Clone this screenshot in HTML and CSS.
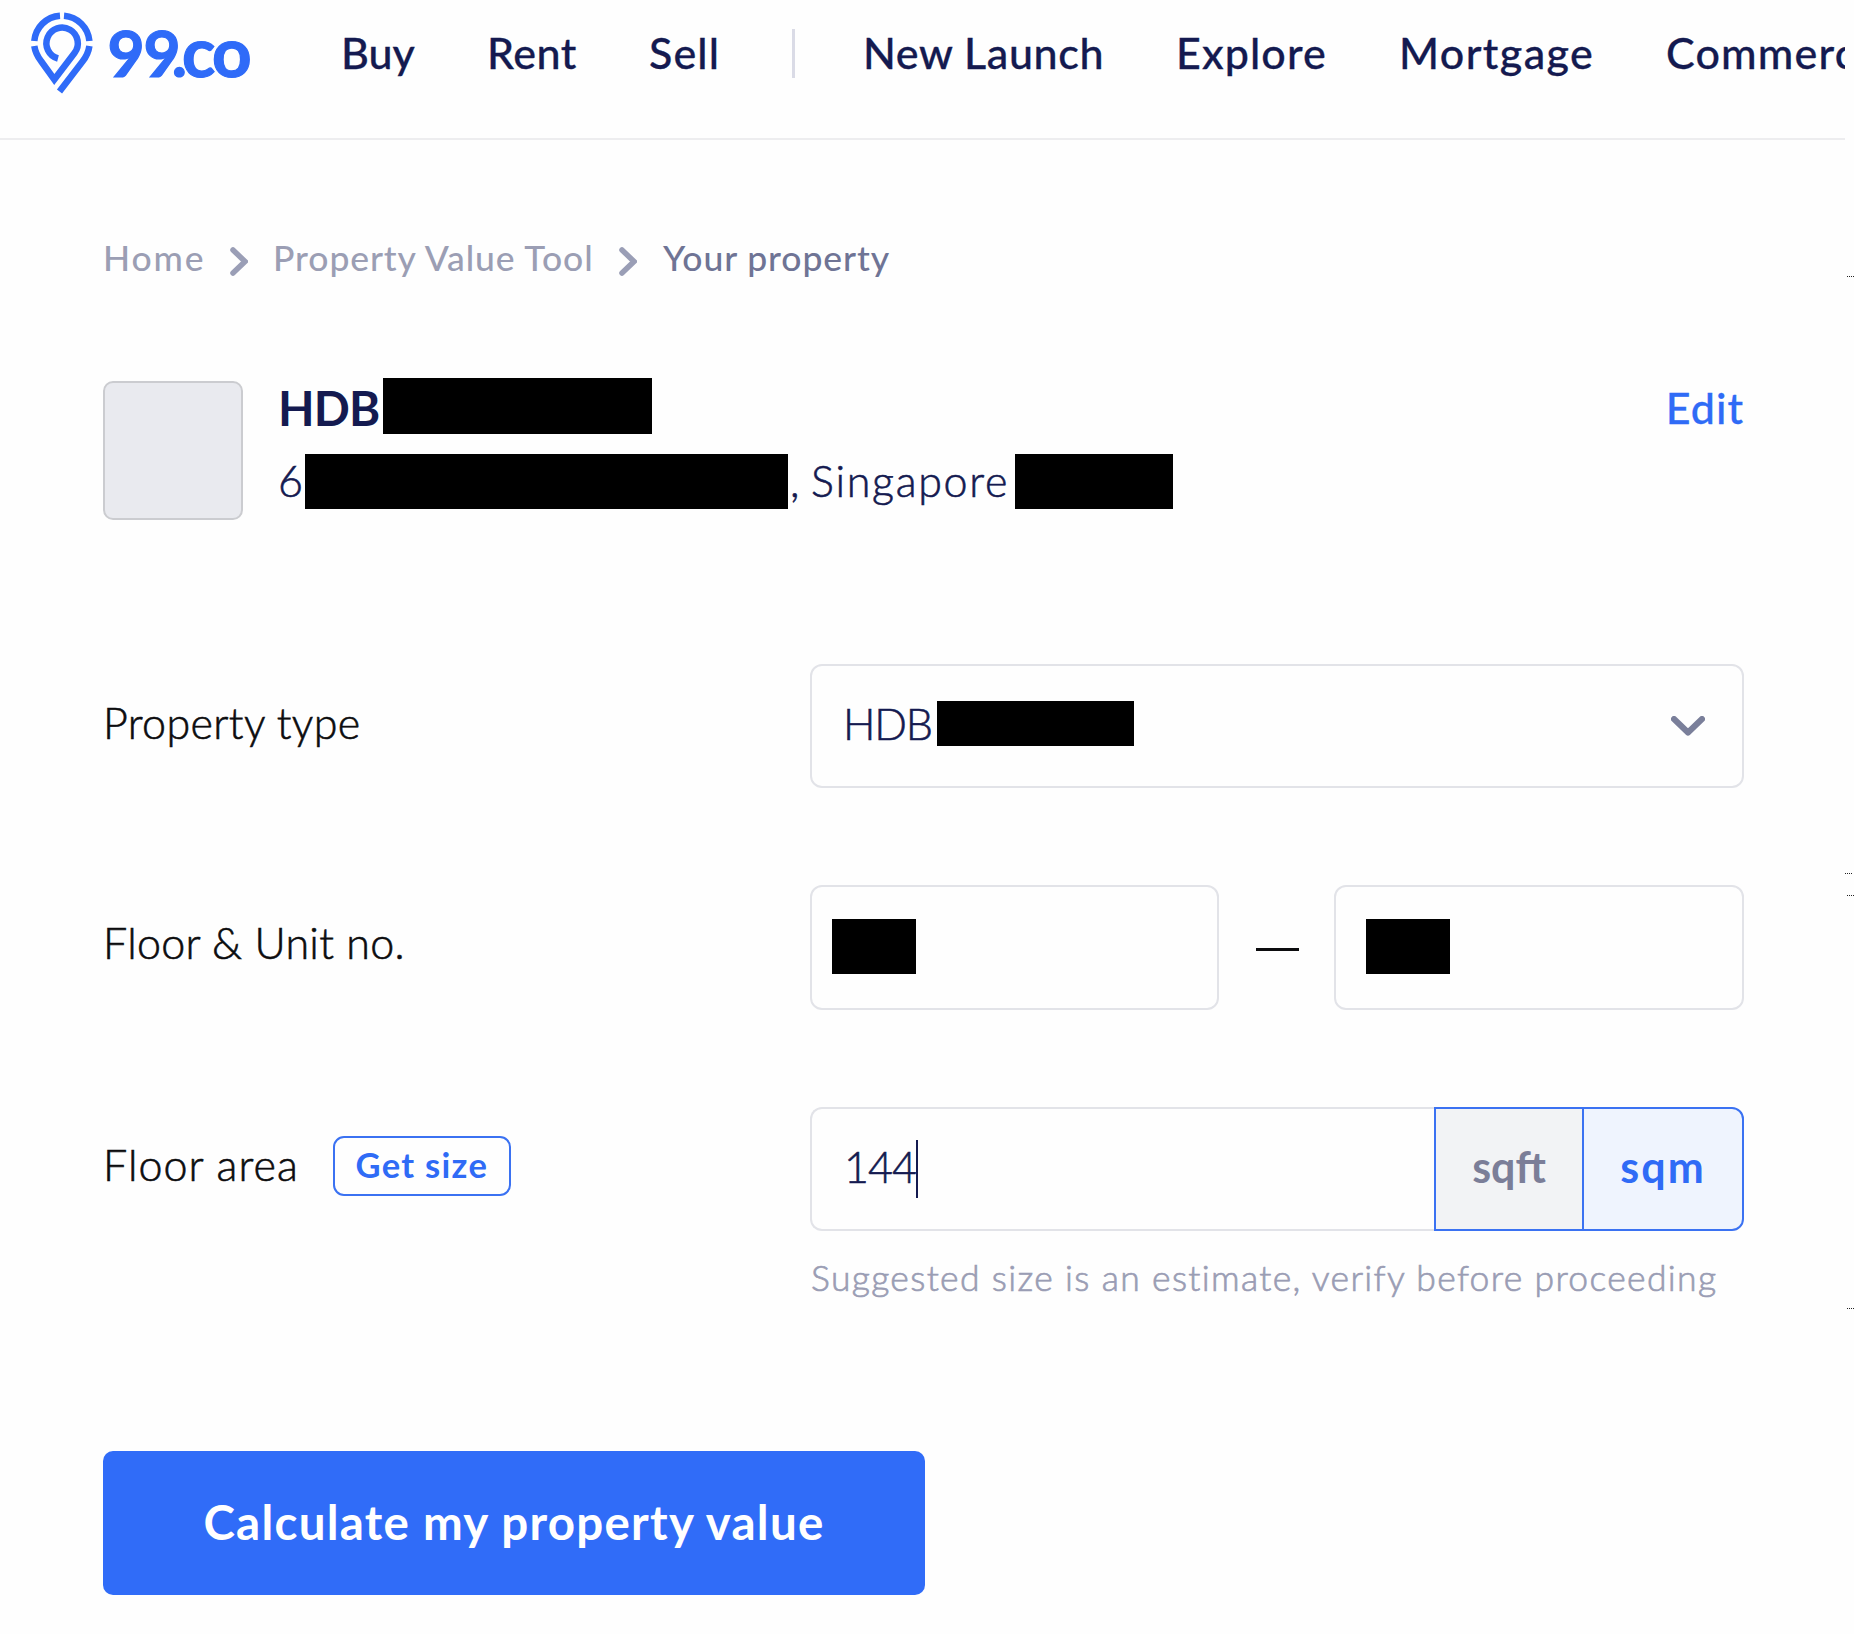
FILE: index.html
```html
<!DOCTYPE html>
<html lang="en">
<head>
<meta charset="utf-8">
<title>99.co – Property Value Tool</title>
<link rel="stylesheet" href="styles.css">
</head>
<body>
<div class="page">
  <header class="header">
    <a class="logo">
      <svg class="pin" viewBox="31 12 62 84" fill="none" stroke="#2f6bf8" stroke-width="6.5">
        <path d="M60 15.700A27.700 27.700 0 0 0 34.300 41"/>
        <path d="M64 15.700A27.700 27.700 0 0 1 89.400 41"/>
        <path d="M34.300 46C35.300 52.500 37.500 56.500 41 61L54.300 79.500L74.500 53A15.700 15.700 0 1 0 58 58.500"/>
        <path d="M89.400 46C88.500 52.500 86.500 56.500 82.500 61.500L59.500 91.500"/>
      </svg>
      <span class="wordmark">99<span class="dot">.</span><span class="co">co</span></span>
    </a>
    <nav class="nav">
      <a class="buy">Buy</a>
      <a class="rent">Rent</a>
      <a class="sell">Sell</a>
      <i class="divider"></i>
      <a class="launch">New Launch</a>
      <a class="explore">Explore</a>
      <a class="mortgage">Mortgage</a>
      <a class="commercial">Commercial</a>
    </nav>
  </header>

  <main class="main">
    <div class="crumbs">
      <a class="crumb-home">Home</a>
      <svg class="sep" viewBox="0 0 18 29"><path d="M3 3L15 14.500L3 26"/></svg>
      <a class="crumb-tool">Property Value Tool</a>
      <svg class="sep" viewBox="0 0 18 29"><path d="M3 3L15 14.500L3 26"/></svg>
      <span class="crumb-current">Your property</span>
    </div>

    <section class="summary">
      <div class="thumb"></div>
      <div class="address">
        <div class="title"><b>HDB</b><i class="mask mask-title"></i></div>
        <div class="street"><span class="block-no">6</span><i class="mask mask-street"></i><span class="comma">,</span><span class="city">Singapore</span><i class="mask mask-postal"></i></div>
      </div>
      <a class="edit">Edit</a>
    </section>

    <form class="form">
      <div class="row">
        <label class="label l-type">Property type</label>
        <div class="field select">
          <span class="value">HDB</span><i class="mask mask-type"></i>
          <svg class="caret-down" viewBox="0 0 34 20"><path d="M3 3L17 16.500L31 3"/></svg>
        </div>
      </div>
      <div class="row">
        <label class="label l-unit">Floor &amp; Unit no.</label>
        <div class="pair">
          <div class="field floor"><i class="mask mask-unit"></i></div>
          <i class="dash"></i>
          <div class="field unit"><i class="mask mask-unit"></i></div>
        </div>
      </div>
      <div class="row">
        <div class="label l-area">Floor area<span class="get-size">Get size</span></div>
        <div>
          <div class="area">
            <div class="field size"><span class="number">144</span><i class="cursor"></i></div>
            <div class="unit-btn sqft">sqft</div>
            <div class="unit-btn sqm">sqm</div>
          </div>
          <p class="hint">Suggested size is an estimate, verify before proceeding</p>
        </div>
      </div>
      <div class="cta">Calculate my property value</div>
    </form>
  </main>
</div>
<i class="tick tick-1"></i><i class="tick tick-2"></i><i class="tick tick-3"></i><i class="tick tick-4"></i>
</body>
</html>
```
FILE: styles.css
```css
* { box-sizing: border-box; }
body {
  margin: 0;
  width: 1854px;
  height: 1634px;
  position: relative;
  overflow: hidden;
  background: #fefefe;
  font-family: Lato, "Open Sans", sans-serif;
  color: #141a50;
}
.page { width: 1845px; overflow: hidden; }
i { display: block; font-style: normal; flex: none; }

/* Header */
.header {
  height: 140px;
  display: flex;
  padding-left: 31px;
  border-bottom: 2px solid #ededef;
}
.logo { width: 310px; flex: none; display: flex; }
.pin { width: 62px; height: 84px; margin-top: 12px; flex: none; display: block; }
.wordmark {
  margin-left: 14.500px;
  font-size: 64px;
  line-height: 105px;
  font-weight: 700;
  letter-spacing: -1px;
  color: #2f6bf8;
  white-space: nowrap;
  -webkit-text-stroke: 1.2px;
}
.dot { margin-left: -8px; }
.co { font-size: 69px; line-height: 1px; margin-left: -4px; letter-spacing: -2.5px; }
.nav {
  display: grid;
  grid-template-columns: 146px 162px 142.500px 71.500px 313px 222px 267px auto;
  font-size: 43px;
  font-weight: 500;
  line-height: 105px;
  white-space: nowrap;
  -webkit-text-stroke: .3px;
}
.divider { width: 3px; height: 49px; margin-top: 29px; background: #dadbe6; }
.rent { letter-spacing: .5px; }
.sell { letter-spacing: 1.1px; }
.launch { letter-spacing: .6px; }
.explore { letter-spacing: 1.1px; }
.mortgage { letter-spacing: 1.400px; padding-left: 1px; }
.commercial { letter-spacing: 1.2px; padding-left: 1px; }

.main { padding: 95px 101px 0 103px; }

/* Breadcrumbs */
.crumbs {
  display: grid;
  grid-template-columns: 127px 43px 346px 44px auto;
  height: 46px;
  font-size: 35.500px;
  font-weight: 500;
  line-height: 46px;
  color: #9b9eb4;
  white-space: nowrap;
}
.sep {
  width: 18px;
  height: 29px;
  margin-top: 12px;
  fill: none;
  stroke: #9a9eb6;
  stroke-width: 5.500;
  stroke-linecap: round;
}
.crumb-home { letter-spacing: 1.9px; }
.crumb-tool { letter-spacing: .9px; }
.crumb-current { letter-spacing: .9px; color: #6f7495; }

/* Property summary */
.summary { display: flex; height: 142px; margin-top: 97px; }
.thumb {
  width: 140px;
  height: 139px;
  margin-top: 3px;
  background: #e9eaef;
  border: 2px solid #cbccd0;
  border-radius: 10px;
}
.address { margin-left: 35px; }
.title, .street { display: flex; align-items: flex-start; white-space: nowrap; }
.title { height: 76px; font-size: 47.500px; line-height: 59px; }
.title b { width: 105px; letter-spacing: -.8px; }
.street { font-size: 43px; line-height: 53px; font-weight: 300; -webkit-text-stroke: .6px; }
.block-no { width: 27px; }
.comma { width: 23px; padding-left: 2px; }
.city { width: 204px; letter-spacing: 1.7px; }
.mask { background: #000; height: 55px; }
.mask-title { width: 269px; height: 56px; }
.mask-street { width: 483px; }
.mask-postal { width: 158px; }
.edit {
  margin-left: auto;
  color: #2f6bf6;
  font-size: 43px;
  font-weight: 500;
  line-height: 60px;
  letter-spacing: 1px;
  -webkit-text-stroke: .3px;
}

/* Form */
.form { margin-top: 144px; }
.row {
  display: grid;
  grid-template-columns: 707px 1fr;
  margin-bottom: 97px;
}
.label {
  display: flex;
  color: #0c0c0e;
  font-size: 43px;
  font-weight: 300;
  line-height: 116px;
  -webkit-text-stroke: .6px;
}
.l-type { letter-spacing: .35px; line-height: 118px; }
.l-unit { letter-spacing: .3px; }
.l-area { letter-spacing: 1.05px; }
.field {
  height: 124px;
  display: flex;
  border: 2px solid #e2e3e8;
  border-radius: 12px;
  font-size: 43px;
  font-weight: 300;
  line-height: 116px;
  -webkit-text-stroke: .6px;
}
.select { padding-left: 31px; }
.value { width: 94px; letter-spacing: -1.2px; }
.mask-type { width: 197px; height: 45px; margin-top: 35px; }
.caret-down {
  width: 34px;
  height: 20px;
  margin: 50px 37px 0 auto;
  fill: none;
  stroke: #7a7f9a;
  stroke-width: 6;
  stroke-linecap: round;
  stroke-linejoin: round;
}
.pair { display: flex; justify-content: space-between; }
.floor, .unit { width: 409px; height: 125px; }
.floor { padding-left: 20px; }
.unit { width: 410px; padding-left: 30px; }
.mask-unit { width: 84px; margin-top: 32px; }
.dash { width: 43px; height: 3px; margin: 63px 0 0 1px; background: #0c0c0e; }
.get-size {
  width: 178px;
  height: 60px;
  margin: 29px 0 0 34px;
  border: 2px solid #3b72f2;
  border-radius: 11px;
  color: #2f6bf6;
  font-size: 34.500px;
  font-weight: 700;
  line-height: 54px;
  letter-spacing: 1.3px;
  text-align: center;
  -webkit-text-stroke: 0;
}
.area { display: flex; height: 124px; }
.size {
  width: 624px;
  padding-left: 32px;
  border-right: 0;
  border-radius: 12px 0 0 12px;
}
.number { letter-spacing: -.9px; }
.cursor { width: 2px; height: 58px; margin: 31px 0 0 0; background: #141a50; }
.unit-btn {
  border: 2px solid #3b72f2;
  font-size: 43px;
  font-weight: 700;
  line-height: 115px;
  text-align: center;
}
.sqft { width: 148px; border-right: 0; background: #f2f3f5; color: #7b7e98; }
.sqm { width: 162px; border-radius: 0 12px 12px 0; background: #eff4fe; color: #2f6bf6; letter-spacing: 2px; }
.hint {
  margin: 24px 0 0;
  padding-left: 1px;
  font-size: 35.500px;
  line-height: 46px;
  font-weight: 300;
  letter-spacing: 1.34px;
  color: #9a9db4;
  white-space: nowrap;
  -webkit-text-stroke: .7px;
}
.cta {
  width: 822px;
  height: 144px;
  margin-top: 150px;
  border-radius: 10px;
  background: #306cf8;
  color: #fff;
  font-size: 47.500px;
  font-weight: 700;
  line-height: 142px;
  letter-spacing: 1.25px;
  text-align: center;
}

/* Dotted marks beside the page edge */
.tick {
  position: absolute;
  right: 0;
  width: 7px;
  height: 1px;
  background: repeating-linear-gradient(90deg, #222 0 1px, transparent 1px 2px);
}
.tick-1 { top: 276px; }
.tick-2 { top: 873px; right: 2px; }
.tick-3 { top: 895px; }
.tick-4 { top: 1308px; }
```
